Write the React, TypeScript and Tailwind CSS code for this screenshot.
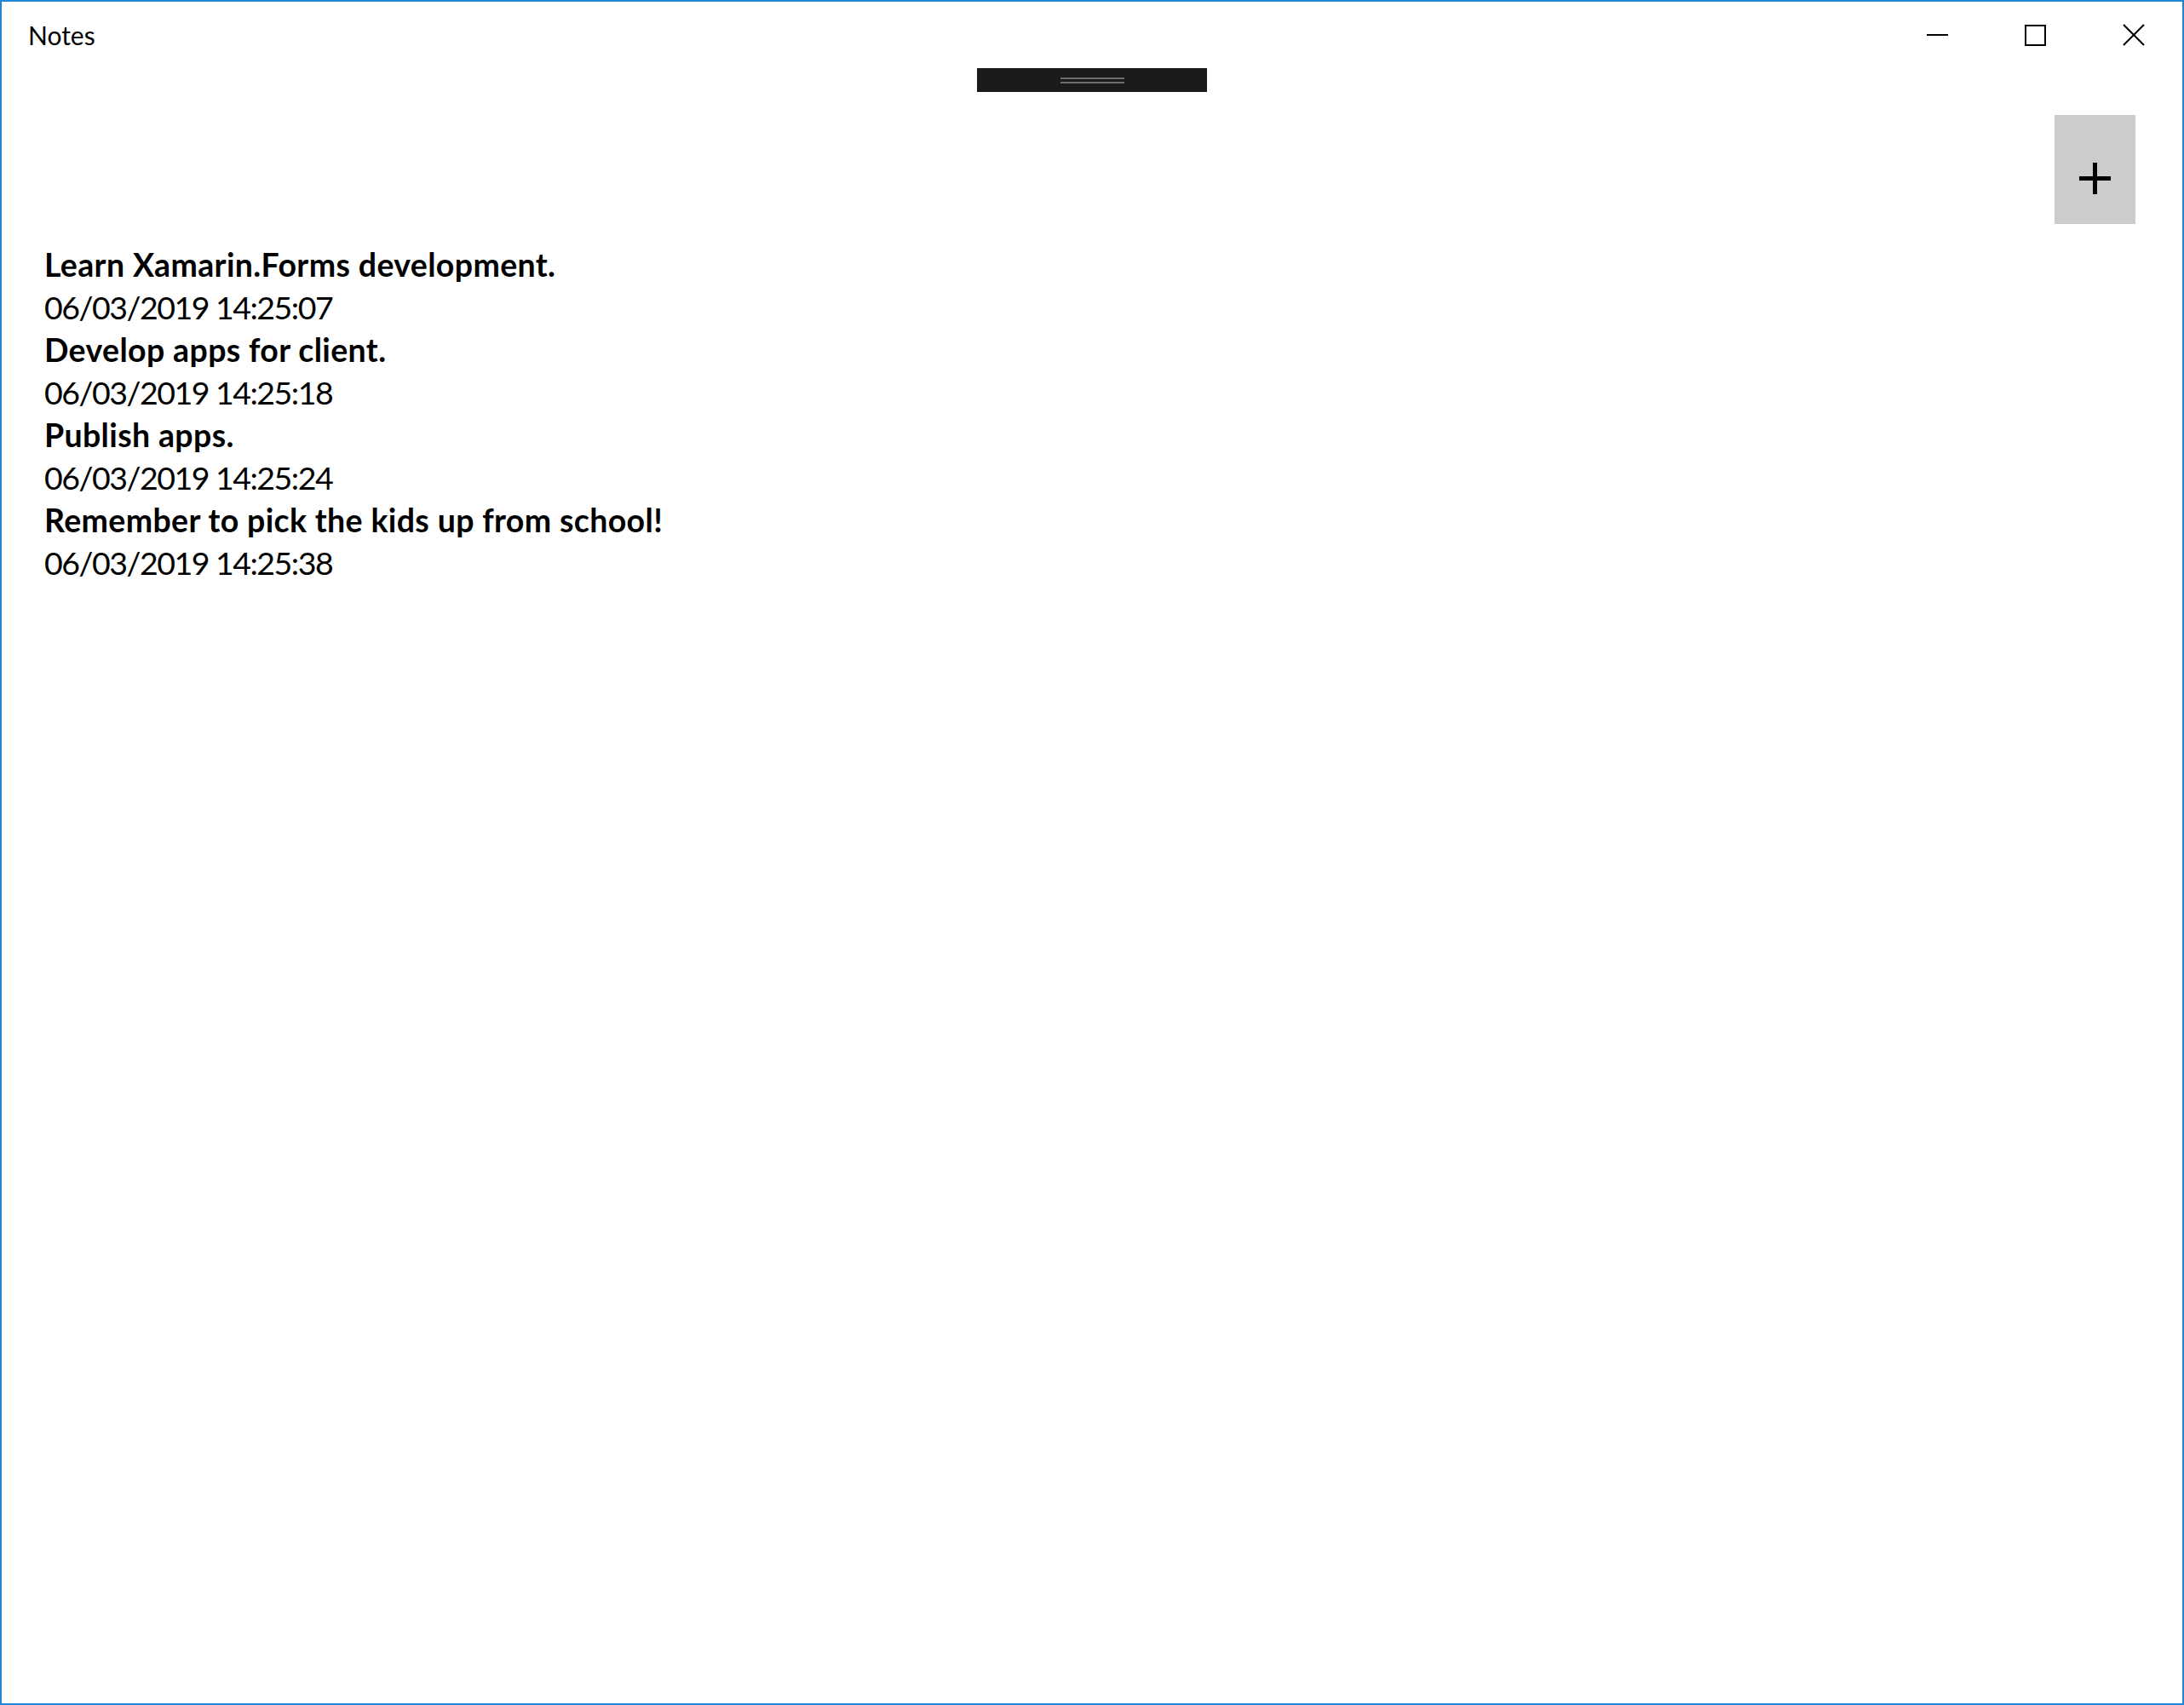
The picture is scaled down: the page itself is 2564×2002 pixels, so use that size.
const notes = [
  { text: 'Learn Xamarin.Forms development.', date: '06/03/2019 14:25:07' },
  { text: 'Develop apps for client.', date: '06/03/2019 14:25:18' },
  { text: 'Publish apps.', date: '06/03/2019 14:25:24' },
  { text: 'Remember to pick the kids up from school!', date: '06/03/2019 14:25:38' },
]

export default function App() {
  return (
    <div
      className="relative w-[2564px] h-[2002px] bg-white border-2 border-[#1e87d8] flex flex-col text-black"
      style={{ fontFamily: 'Lato, "Noto Sans", sans-serif' }}
    >
      {/* Title bar */}
      <div className="h-[78px] flex items-center justify-between shrink-0">
        <span className="pl-[31px] text-[30px] leading-none">Notes</span>
        <div className="flex h-full">
          <button className="w-[115px] h-full flex items-center justify-center">
            <span className="block w-[25px] h-[2px] bg-black" />
          </button>
          <button className="w-[115px] h-full flex items-center justify-center">
            <span className="block w-[25px] h-[25px] border-[2.5px] border-black" />
          </button>
          <button className="w-[115px] h-full flex items-center justify-center">
            <svg width="26" height="26" viewBox="0 0 26 26">
              <path d="M1 1 L25 25 M25 1 L1 25" stroke="black" strokeWidth="2" />
            </svg>
          </button>
        </div>
      </div>

      {/* Debug overlay toolbar */}
      <div className="absolute left-[1145px] top-[78px] w-[270px] h-[28px] bg-[#1b1b1b] flex flex-col items-center justify-center gap-[3px]">
        <span className="block w-[75px] h-[2px] bg-[#6e6e6e]" />
        <span className="block w-[75px] h-[2px] bg-[#6e6e6e]" />
      </div>

      {/* Command bar */}
      <div className="flex justify-end pt-[55px] pr-[55px]">
        <button className="w-[95px] h-[128px] bg-[#cccccc] flex justify-center pt-[56px]">
          <svg width="37" height="37" viewBox="0 0 37 37">
            <path d="M0 18.5 H37 M18.5 0 V37" stroke="black" strokeWidth="5" />
          </svg>
        </button>
      </div>

      {/* Notes list */}
      <div className="mt-[23px] pl-[50px] flex flex-col">
        {notes.map((n) => (
          <div key={n.date} className="flex flex-col">
            <span className="text-[37.5px] leading-[50px] font-bold tracking-[0.35px]">{n.text}</span>
            <span className="text-[37.5px] leading-[50px] tracking-[-1.5px]">{n.date}</span>
          </div>
        ))}
      </div>
    </div>
  )
}
